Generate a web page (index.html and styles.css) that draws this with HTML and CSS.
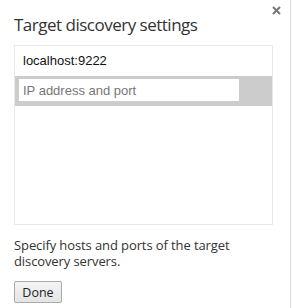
FILE: index.html
```html
<!DOCTYPE html>
<html lang="en">
<head>
    <meta charset="UTF-8">
    <title>Target discovery settings</title>
    <link rel="stylesheet" href="styles.css">
</head>
<body>
    <div class="dialog">
        <button class="close-btn" title="Close">
            <svg width="9" height="9" viewBox="0 0 9 9"><path d="M1 1L8 8M8 1L1 8" stroke="#777" stroke-width="2"/></svg>
        </button>
        <h1>Target discovery settings</h1>

        <div class="list">
            <div class="list-item">localhost:9222</div>
            <div class="list-item editing">
                <input type="text" placeholder="IP address and port">
            </div>
        </div>

        <p class="note">Specify hosts and ports of the target discovery servers.</p>

        <button class="btn">Done</button>
    </div>
</body>
</html>
```

FILE: styles.css
```css
* {
    margin: 0;
    padding: 0;
    box-sizing: border-box;
}

body {
    font-family: 'Open Sans', sans-serif;
    background: white;
    color: #333;
}

.dialog {
    position: relative;
    width: 291px;
    height: 308px;
    border-right: 1px solid #ddd;
    padding: 15px 17px 0 14px;
}

.close-btn {
    position: absolute;
    top: 6px;
    right: 9px;
    border: none;
    background: none;
    width: 9px;
    height: 9px;
    display: flex;
}

h1 {
    font-size: 17px;
    font-weight: normal;
    letter-spacing: -0.5px;
    color: #333;
    line-height: 20px;
    margin-bottom: 10px;
}

.list {
    height: 180px;
    border: 1px solid #e8e8e8;
}

.list-item {
    font-family: 'Liberation Sans', Arial, sans-serif;
    font-size: 13px;
    color: #111;
    height: 30px;
    padding: 7px 8px;
    line-height: 16px;
}

.list-item.editing {
    background: #ccc;
    padding: 3px 33px 3px 4px;
}

.list-item input {
    display: block;
    width: 100%;
    height: 22px;
    border: none;
    padding: 0 4px;
    font-family: 'Liberation Sans', Arial, sans-serif;
    font-size: 13px;
    outline: none;
}

.list-item input::placeholder {
    color: #777;
}

.note {
    font-size: 13px;
    line-height: 16px;
    letter-spacing: -0.1px;
    margin-top: 12px;
    margin-bottom: 12px;
}

.btn {
    display: block;
    font-family: 'Open Sans', sans-serif;
    font-size: 12.5px;
    color: #222;
    width: 48px;
    height: 22px;
    border: 1px solid #aaa;
    border-radius: 2px;
    background: linear-gradient(#f4f4f4, #e4e4e4);
}
```
